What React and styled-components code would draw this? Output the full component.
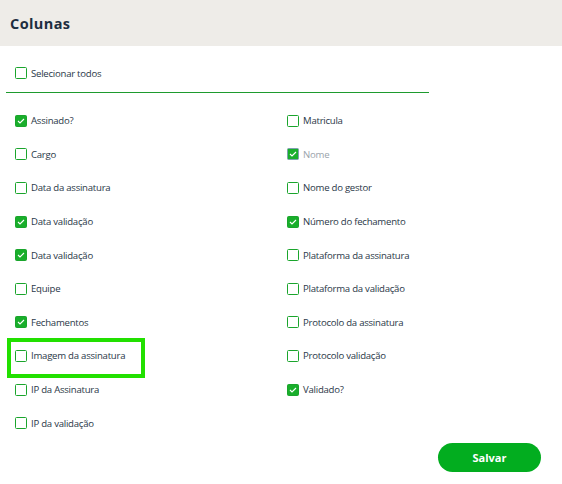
import React from "react";
import styled, { createGlobalStyle } from "styled-components";

const GlobalStyle = createGlobalStyle`
    body {
        margin: 0;
        background: #ffffff;
        font-family: "Open Sans", "Noto Sans", sans-serif;
    }
`;

const columns = [
    { label: "Assinado?", checked: true },
    { label: "Matricula" },
    { label: "Cargo" },
    { label: "Nome", checked: true, disabled: true },
    { label: "Data da assinatura" },
    { label: "Nome do gestor" },
    { label: "Data validação", checked: true },
    { label: "Número do fechamento", checked: true },
    { label: "Data validação", checked: true },
    { label: "Plataforma da assinatura" },
    { label: "Equipe" },
    { label: "Plataforma da validação" },
    { label: "Fechamentos", checked: true },
    { label: "Protocolo da assinatura" },
    { label: "Imagem da assinatura", highlighted: true },
    { label: "Protocolo validação" },
    { label: "IP da Assinatura" },
    { label: "Validado?", checked: true },
    { label: "IP da validação" },
];

const CheckBox = ({ checked, disabled }) => (
    <Box $checked={checked} $disabled={disabled}>
        {checked && (
            <svg width="8" height="6" viewBox="0 0 8 6">
                <polyline
                    points="1,3 3,5 7,1"
                    fill="none"
                    stroke="#ffffff"
                    strokeWidth="1.1"
                />
            </svg>
        )}
    </Box>
);

const Option = ({ label, checked, disabled, highlighted }) => (
    <Item $disabled={disabled} $highlighted={highlighted}>
        <CheckBox checked={checked} disabled={disabled} />
        {label}
    </Item>
);

export default function App() {
    return (
        <Page>
            <GlobalStyle />
            <Header>
                <Title>Colunas</Title>
            </Header>
            <SelectAll>
                <Option label="Selecionar todos" />
            </SelectAll>
            <Divider />
            <Grid>
                {columns.map((c, i) => (
                    <Option key={i} {...c} />
                ))}
            </Grid>
            <Footer>
                <SaveBtn>Salvar</SaveBtn>
            </Footer>
        </Page>
    );
}

const Page = styled.div`
    width: 562px;
    height: 484px;
    background: #ffffff;
`;

const Header = styled.div`
    height: 46px;
    background: #eeece8;
    display: flex;
    align-items: center;
    padding-left: 10px;
`;

const Title = styled.h2`
    margin: 0;
    font-size: 14.5px;
    font-weight: 700;
    letter-spacing: 0.4px;
    color: #1d2e40;
`;

const SelectAll = styled.div`
    height: 20px;
    margin-top: 17px;
    padding-left: 15px;
    display: flex;
`;

const Divider = styled.div`
    margin: 9px 0 0 6px;
    width: 423px;
    height: 1px;
    background: #1e9b2e;
`;

const Grid = styled.div`
    display: grid;
    grid-template-columns: 272px 1fr;
    grid-auto-rows: 33.6px;
    padding: 11px 0 0 15px;
`;

const Item = styled.label`
    position: relative;
    display: flex;
    align-items: center;
    gap: 4px;
    font-size: 9.6px;
    letter-spacing: -0.25px;
    color: ${(p) => (p.$disabled ? "#9aa3ab" : "#2a3848")};

    ${(p) =>
        p.$highlighted &&
        `
        &::after {
            content: "";
            position: absolute;
            left: -8px;
            top: 50%;
            margin-top: -18px;
            width: 138px;
            height: 40px;
            border: 4px solid #22e000;
            box-sizing: border-box;
        }
    `}
`;

const Box = styled.span`
    box-sizing: border-box;
    width: 12px;
    height: 12px;
    border-radius: 1.5px;
    border: 1.3px solid ${(p) => (p.$disabled ? "#7fa0b0" : "#1aa52c")};
    background: ${(p) => (p.$checked ? "#19ae2b" : "#ffffff")};
    display: flex;
    align-items: center;
    justify-content: center;
    flex-shrink: 0;
`;

const Footer = styled.div`
    display: flex;
    justify-content: flex-end;
    padding: 3px 21px 0 0;
`;

const SaveBtn = styled.button`
    width: 103px;
    height: 29px;
    border: none;
    border-radius: 15px;
    background: #02ad1f;
    color: #ffffff;
    font-family: "Open Sans", "Noto Sans", sans-serif;
    font-size: 11px;
    font-weight: 700;
    cursor: pointer;
`;
